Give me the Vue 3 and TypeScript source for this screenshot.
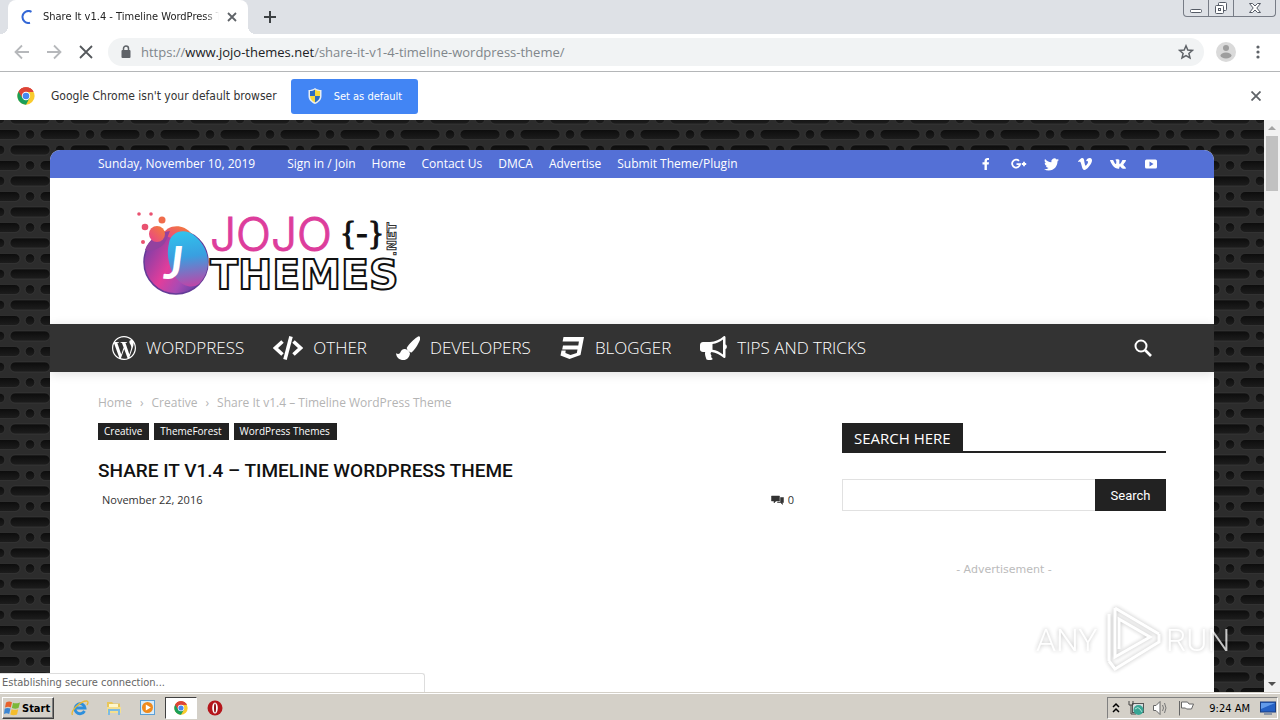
<script setup lang="ts">
import { ref } from 'vue'

interface NavItem { label: string; icon: string }

const query = ref('')
const address = { scheme: 'https://', host: 'www.jojo-themes.net', path: '/share-it-v1-4-timeline-wordpress-theme/' }
const topLinks: string[] = ['Sign in / Join', 'Home', 'Contact Us', 'DMCA', 'Advertise', 'Submit Theme/Plugin']
const socials: string[] = ['facebook', 'google', 'twitter', 'vimeo', 'vk', 'youtube']
const nav: NavItem[] = [
  { label: 'WORDPRESS', icon: 'wordpress' },
  { label: 'OTHER', icon: 'code' },
  { label: 'DEVELOPERS', icon: 'brush' },
  { label: 'BLOGGER', icon: 'css' },
  { label: 'TIPS AND TRICKS', icon: 'horn' },
]
const tags: string[] = ['Creative', 'ThemeForest', 'WordPress Themes']
</script>

<template>
  <div class="screen">
    <svg class="defs" aria-hidden="true">
      <symbol id="chrome" viewBox="0 0 24 24">
        <circle cx="12" cy="12" r="11.5" fill="#f9cb2e" />
        <path d="M12 12 2 6.3A11.5 11.5 0 0 1 22 6.3L12 6.5Z" fill="#dd4437" />
        <path d="M2 6.3A11.5 11.5 0 0 0 12 23.5L16.8 14.8 12 12Z" fill="#1a9f59" />
        <path d="M12 6.5H22.1A11.5 11.5 0 0 0 2 6.3L7.2 14.8Z" fill="#dd4437" />
        <circle cx="12" cy="12" r="5.6" fill="#fff" />
        <circle cx="12" cy="12" r="4.4" fill="#4688f1" />
      </symbol>
    </svg>

    <header class="tabs">
      <div class="tab">
        <svg class="spinner" viewBox="0 0 14 14"><path d="M10.5 1.8A6 6 0 1 0 9 12.8" fill="none" stroke="#3367d6" stroke-width="2" /></svg>
        <span class="tab-title">Share It v1.4 - Timeline WordPress Theme</span>
        <button class="plain" aria-label="Close tab">
          <svg width="10" height="10" viewBox="0 0 10 10"><path d="M1 1 9 9M9 1 1 9" stroke="#5f6368" stroke-width="1.8" /></svg>
        </button>
      </div>
      <button class="plain new-tab" aria-label="New tab">
        <svg width="12" height="12" viewBox="0 0 12 12"><path d="M6 0V12M0 6H12" stroke="#3c4043" stroke-width="2" /></svg>
      </button>
      <div class="win">
        <button aria-label="Minimize"><svg width="14" height="14" viewBox="0 0 14 14"><rect x="1.5" y="8.5" width="11" height="3" rx="1" fill="#fff" stroke="#555b66" /></svg></button>
        <button aria-label="Restore"><svg width="14" height="14" viewBox="0 0 14 14"><rect x="4.500" y="1.500" width="8" height="8" rx="1" fill="#fff" stroke="#555b66" /><rect x="1.500" y="4.500" width="8" height="8" rx="1" fill="#fff" stroke="#555b66" /><rect x="4.500" y="7.500" width="2" height="2" fill="none" stroke="#555b66" /></svg></button>
        <button class="wide" aria-label="Close"><svg width="14" height="14" viewBox="0 0 14 14"><path d="M1.500 2.500H4.500L7 5 9.500 2.500H12.500L8.800 7 12.500 11.500H9.500L7 9 4.500 11.500H1.500L5.200 7Z" fill="#fff" stroke="#555b66" /></svg></button>
      </div>
    </header>

    <div class="toolbar">
      <button class="plain" aria-label="Back"><svg width="16" height="16" viewBox="0 0 16 16"><path d="M15 8H2M8 1.500 1.500 8 8 14.500" fill="none" stroke="#b6b8bb" stroke-width="1.800" /></svg></button>
      <button class="plain" aria-label="Forward"><svg width="16" height="16" viewBox="0 0 16 16"><path d="M1 8H14M8 1.500 14.500 8 8 14.500" fill="none" stroke="#b6b8bb" stroke-width="1.800" /></svg></button>
      <button class="plain" aria-label="Stop"><svg width="16" height="16" viewBox="0 0 16 16"><path d="M2 2 14 14M14 2 2 14" stroke="#55585c" stroke-width="1.800" /></svg></button>
      <div class="omnibox">
        <svg width="10" height="14" viewBox="0 0 10 14"><path d="M2.500 6V3.500a2.500 2.500 0 0 1 5 0V6" fill="none" stroke="#5f6368" stroke-width="1.500" /><rect x="0.500" y="5" width="9" height="8" rx="1" fill="#5f6368" /></svg>
        <p class="url">{{ address.scheme }}<b>{{ address.host }}</b>{{ address.path }}</p>
        <button class="plain" aria-label="Bookmark"><svg width="16" height="16" viewBox="0 0 16 16"><path d="M8 1.800 9.800 6 14.400 6.400 10.900 9.400 12 13.900 8 11.500 4 13.900 5.100 9.400 1.600 6.400 6.200 6Z" fill="none" stroke="#5f6368" stroke-width="1.500" /></svg></button>
      </div>
      <button class="plain profile" aria-label="Profile"><svg width="20" height="20" viewBox="0 0 20 20"><circle cx="10" cy="10" r="10" fill="#dadada" /><circle cx="10" cy="6" r="3" fill="#9e9e9e" /><ellipse cx="10" cy="13.500" rx="5.500" ry="3" fill="#9e9e9e" /></svg></button>
      <button class="plain" aria-label="Menu"><svg width="4" height="14" viewBox="0 0 4 14" fill="#5f6368"><circle cx="2" cy="2" r="1.600" /><circle cx="2" cy="7" r="1.600" /><circle cx="2" cy="12" r="1.600" /></svg></button>
    </div>

    <div class="infobar">
      <svg width="18" height="18"><use href="#chrome" /></svg>
      <span class="info-text">Google Chrome isn't your default browser</span>
      <button class="set-default">
        <svg width="14" height="16" viewBox="0 0 14 16"><path d="M7 0C5 1.500 3 2 0.500 2V8c0 4 3 6.500 6.500 8 3.500-1.500 6.500-4 6.500-8V2C11 2 9 1.500 7 0Z" fill="#e8edf2" /><path d="M7 1.500C5.500 2.500 4 3 2 3V8H7Z" fill="#2c6cc4" /><path d="M7 1.500C8.500 2.500 10 3 12 3V8H7Z" fill="#f7d93b" /><path d="M2 8H7V14.500C4 13 2 11 2 8Z" fill="#f7d93b" /><path d="M12 8H7V14.500C10 13 12 11 12 8Z" fill="#2c6cc4" /></svg>
        <span>Set as default</span>
      </button>
      <button class="plain dismiss" aria-label="Dismiss"><svg width="10" height="10" viewBox="0 0 10 10"><path d="M0.500 0.500 9.500 9.500M9.500 0.500 0.500 9.500" stroke="#5f6368" stroke-width="1.800" /></svg></button>
    </div>

    <div class="viewport">
      <div class="canvas">
        <svg class="texture" aria-hidden="true">
          <defs>
            <linearGradient id="hole" x1="0" y1="0" x2="0" y2="1"><stop offset="0" stop-color="#0c0c0c" /><stop offset="1" stop-color="#1d1d1d" /></linearGradient>
            <pattern id="grille" width="60" height="31" patternUnits="userSpaceOnUse">
              <rect width="60" height="31" fill="#2c2c2c" />
              <g fill="url(#hole)" stroke="#3a3a3a" stroke-width="0.600">
                <rect x="-20" y="9.500" width="40" height="10" rx="5" />
                <rect x="40" y="9.500" width="40" height="10" rx="5" />
                <circle cx="30" cy="14.500" r="4.800" />
                <rect x="10" y="25" width="40" height="10" rx="5" />
                <rect x="10" y="-6" width="40" height="10" rx="5" />
                <circle cx="0" cy="30" r="4.800" /><circle cx="60" cy="30" r="4.800" />
                <circle cx="0" cy="-1" r="4.800" /><circle cx="60" cy="-1" r="4.800" />
              </g>
            </pattern>
          </defs>
          <rect width="100%" height="100%" fill="url(#grille)" />
        </svg>

        <div class="site">
          <div class="topbar">
            <span class="date">Sunday, November 10, 2019</span>
            <nav class="toplinks"><a v-for="link in topLinks" :key="link" href="#">{{ link }}</a></nav>
            <div class="socials">
              <a v-for="s in socials" :key="s" href="#" :aria-label="s">
                <svg v-if="s === 'facebook'" width="14" height="14" viewBox="0 0 14 14"><path d="M5.500 13V7.500H3.500V5.300H5.500V4C5.500 2 6.700 1 8.500 1H10V3.100H9C8.200 3.100 7.900 3.500 7.900 4.200V5.300H10L9.700 7.500H7.900V13Z" fill="#fff" /></svg>
                <svg v-else-if="s === 'google'" width="16" height="14" viewBox="0 0 16 14"><path d="M8 3.800A4 4 0 1 0 9.100 7.200H5.500M13 4.800V9.200M10.800 7H15.200" fill="none" stroke="#fff" stroke-width="1.800" /></svg>
                <svg v-else-if="s === 'twitter'" width="15" height="15" viewBox="0 0 24 24"><path fill="#fff" d="M23.953 4.570a10 10 0 01-2.825.775 4.958 4.958 0 002.163-2.723c-.951.555-2.005.959-3.127 1.184a4.920 4.920 0 00-8.384 4.482C7.690 8.095 4.067 6.130 1.640 3.162a4.822 4.822 0 00-.666 2.475c0 1.710.870 3.213 2.188 4.096a4.904 4.904 0 01-2.228-.616v.060a4.923 4.923 0 003.946 4.827 4.996 4.996 0 01-2.212.085 4.936 4.936 0 004.604 3.417 9.867 9.867 0 01-6.102 2.105c-.390 0-.779-.023-1.170-.067a13.995 13.995 0 007.557 2.209c9.053 0 13.998-7.496 13.998-13.985 0-.210 0-.420-.015-.630A9.935 9.935 0 0024 4.590z" /></svg>
                <svg v-else-if="s === 'vimeo'" width="14" height="14" viewBox="0 0 24 24"><path fill="#fff" d="M23.977 6.416c-.105 2.338-1.739 5.543-4.894 9.609-3.268 4.247-6.026 6.370-8.290 6.370-1.409 0-2.578-1.294-3.553-3.881L5.322 11.400C4.603 8.816 3.834 7.522 3.010 7.522c-.179 0-.806.378-1.881 1.132L0 7.197a315.065 315.065 0 003.501-3.128C5.080 2.701 6.266 1.984 7.055 1.910c1.867-.180 3.016 1.100 3.447 3.838.465 2.953.789 4.789.971 5.507.539 2.450 1.131 3.674 1.776 3.674.502 0 1.256-.796 2.265-2.385 1.004-1.589 1.540-2.797 1.612-3.628.144-1.371-.395-2.061-1.614-2.061-.574 0-1.167.121-1.777.391 1.186-3.868 3.434-5.757 6.762-5.637 2.473.060 3.628 1.664 3.493 4.797z" /></svg>
                <svg v-else-if="s === 'vk'" width="16" height="16" viewBox="0 0 24 24"><path fill="#fff" d="M13.162 18.994c.609 0 .858-.406.851-.915-.031-1.917.714-2.949 2.059-1.604 1.488 1.488 1.796 2.519 3.603 2.519h3.200c.808 0 1.126-.260 1.126-.668 0-.863-1.421-2.386-2.625-3.504-1.686-1.565-1.765-1.602-.313-3.486 1.801-2.339 4.157-5.336 2.073-5.336h-3.981c-.772 0-.828.435-1.103 1.083-.995 2.347-2.886 5.387-3.604 4.922-.751-.485-.407-2.406-.350-5.261.015-.754.011-1.271-1.141-1.539-.629-.145-1.241-.205-1.809-.205-2.273 0-3.841.953-2.950 1.119 1.571.293 1.420 3.692 1.054 5.160-.638 2.556-3.036-2.024-4.035-4.305-.241-.548-.315-.974-1.175-.974h-3.255c-.492 0-.787.160-.787.516 0 .602 2.960 6.720 5.786 9.770 2.756 2.975 5.480 2.708 7.376 2.708z" /></svg>
                <svg v-else width="14" height="14" viewBox="0 0 14 14"><path d="M2.500 2.500H11.500Q13 2.500 13 4V10Q13 11.500 11.500 11.500H2.500Q1 11.500 1 10V4Q1 2.500 2.500 2.500ZM5.500 4.500V9.500L9.500 7Z" fill="#fff" fill-rule="evenodd" /></svg>
              </a>
            </div>
          </div>

          <div class="brand">
            <a href="#" aria-label="JOJO THEMES">
              <svg width="270" height="90" viewBox="0 0 270 90">
                <defs>
                  <linearGradient id="orb" x1="0" y1="0.300" x2="1" y2="0.900"><stop offset="0" stop-color="#7a3fa8" /><stop offset="0.400" stop-color="#e23d9b" /><stop offset="0.650" stop-color="#a84bb4" /><stop offset="1" stop-color="#423c9c" /></linearGradient>
                  <linearGradient id="wave" x1="0.500" y1="0" x2="0.600" y2="1"><stop offset="0" stop-color="#30c2ec" /><stop offset="0.450" stop-color="#399fe0" /><stop offset="1" stop-color="#c044a6" /></linearGradient>
                  <linearGradient id="warm" x1="0" y1="1" x2="1" y2="0"><stop offset="0" stop-color="#e73f92" /><stop offset="1" stop-color="#f5822f" /></linearGradient>
                </defs>
                <circle cx="42" cy="54" r="32" fill="url(#orb)" stroke="#643b97" stroke-width="1.500" />
                <path d="M28 27C33 17 48 14 58 26L44 32Z" fill="url(#warm)" />
                <path d="M35 35C37 24 50 19 61 28 77 42 78 62 65 76 54 84 38 72 35 54 33 46 34 40 35 35Z" fill="url(#wave)" />
                <path d="M11 42C17 44 25 41 30 36 34 30 34 27 36 23 25 24 14 32 11 42Z" fill="#93429f" />
                <circle cx="23" cy="26" r="8" fill="url(#warm)" />
                <g fill="#e95270"><circle cx="28" cy="12" r="3.500" fill="#f06c4b" /><circle cx="11" cy="19" r="3.300" /><circle cx="5" cy="6" r="1.800" /><circle cx="17" cy="6" r="1.800" /><circle cx="9" cy="34" r="2" /></g>
                <text x="30" y="71" class="orb-j">J</text>
                <text x="76" y="43" class="jojo">JOJO</text>
                <text x="206" y="36" class="brace">{-}</text>
                <text x="76" y="81" class="themes">THEMES</text>
                <text transform="translate(262 48) rotate(-90)" class="net">.NET</text>
              </svg>
            </a>
          </div>

          <nav class="mainnav">
            <a v-for="item in nav" :key="item.label" href="#">
              <svg v-if="item.icon === 'wordpress'" width="24" height="24" viewBox="0 0 24 24"><path fill="#fff" d="M21.469 6.825c.840 1.537 1.318 3.300 1.318 5.175 0 3.979-2.156 7.456-5.363 9.325l3.295-9.527c.615-1.540.820-2.771.820-3.864 0-.405-.026-.780-.070-1.110m-7.981.105c.647-.030 1.232-.105 1.232-.105.582-.075.514-.930-.067-.899 0 0-1.755.135-2.880.135-1.064 0-2.850-.150-2.850-.150-.585-.030-.661.855-.075.885 0 0 .540.061 1.125.090l1.680 4.605-2.370 7.080L5.354 6.900c.649-.030 1.234-.100 1.234-.100.585-.075.516-.930-.065-.896 0 0-1.746.138-2.874.138-.200 0-.438-.008-.690-.015C4.911 3.150 8.235 1.215 12 1.215c2.809 0 5.365 1.072 7.286 2.833-.046-.003-.091-.009-.141-.009-1.060 0-1.812.923-1.812 1.914 0 .890.513 1.643 1.060 2.531.411.720.890 1.643.890 2.977 0 .915-.354 1.994-.821 3.479l-1.075 3.585-3.900-11.610.001.014zM12 22.784c-1.059 0-2.081-.153-3.048-.437l3.237-9.406 3.315 9.087c.024.053.050.101.078.149-1.120.393-2.325.609-3.582.609M1.211 12c0-1.564.336-3.050.935-4.390L7.290 21.709C3.694 19.960 1.212 16.271 1.211 12M12 0C5.385 0 0 5.385 0 12s5.385 12 12 12 12-5.385 12-12S18.615 0 12 0" /></svg>
              <svg v-else-if="item.icon === 'code'" width="30" height="24" viewBox="0 0 30 24"><path d="M9.500 5.500 2.500 12 9.500 18.500M20.500 5.500 27.500 12 20.500 18.500" fill="none" stroke="#fff" stroke-width="3.600" /><path d="M18 0.500 12 23.500" stroke="#fff" stroke-width="3.600" /></svg>
              <svg v-else-if="item.icon === 'brush'" width="24" height="24" viewBox="0 0 24 24" fill="#fff"><path d="M23.500 0.500C25 2 24 4 22.500 7 20.500 11 18 14.500 15.500 16.500 14 17 10.500 14 10.800 11.800 12.500 8.500 18 3 21 1.200Q22.600 0 23.500 0.500Z" /><path d="M9.800 13.200C11.500 13.600 13.800 15.600 14 17.500 13.300 21.500 11 24 7.500 24 3 24 0.500 21.500 0 17.200 1.800 18.300 3.500 18.500 4.500 16 5.500 13.500 7.500 12.700 9.800 13.200Z" /></svg>
              <svg v-else-if="item.icon === 'css'" width="25" height="24" viewBox="0 0 25 24"><path d="M3.500 1H24L20.500 19 9.500 23 0.500 19.500 1.500 14.500H5.700L5.400 17 10.500 19 16.800 17 17.500 13.500H2.200L3 9.500H18.300L18.900 5.500H2.600Z" fill="#fff" /></svg>
              <svg v-else width="27" height="24" viewBox="0 0 27 24"><path d="M24 0C25 0 25.500 0.500 25.500 1.500V8.500C27.300 9 27.300 12.500 25.500 13V20.500C25.500 21.500 25 22 24 22 20 18.500 16 16.500 11.500 16 10 17 10.500 18.500 11.500 19.500 10.800 21 11.500 22 12.800 23 11.500 24.500 8 24.300 6.500 23.500 5.700 21 4.500 18.500 5.200 16H3C1.500 16 0 14.800 0 13.500V9C0 7 1.500 6 3 6H10C15 6 20 3.500 24 0ZM23 3.500C19.500 6 16.500 7.500 12.500 8V13.800C16.500 14.200 19.500 15.800 23 18.500Z" fill="#fff" fill-rule="evenodd" /></svg>
              <span>{{ item.label }}</span>
            </a>
            <button class="plain find" aria-label="Open search"><svg width="18" height="18" viewBox="0 0 18 18"><circle cx="7" cy="7" r="5.500" fill="none" stroke="#fff" stroke-width="2" /><path d="M11 11 17 17" stroke="#fff" stroke-width="2.600" /></svg></button>
          </nav>

          <div class="content">
            <nav class="crumbs"><a href="#">Home</a><i>›</i><a href="#">Creative</a><i>›</i><span>Share It v1.4 – Timeline WordPress Theme</span></nav>
            <div class="columns">
              <main>
                <div class="tags"><a v-for="t in tags" :key="t" href="#">{{ t }}</a></div>
                <h1>SHARE IT V1.4 – TIMELINE WORDPRESS THEME</h1>
                <div class="meta">
                  <time>November 22, 2016</time>
                  <a href="#"><svg width="13" height="10" viewBox="0 0 13 10"><path d="M0.500 1H8.500V6H5L3 8V6H0.500Z M9.500 2.500H12.500V7.500H11.500V9.500L9.500 7.500H6.500V7H9.500Z" fill="#333" stroke="#333" stroke-width="0.500" /></svg>0</a>
                </div>
              </main>
              <aside>
                <h4><span>SEARCH HERE</span></h4>
                <form @submit.prevent>
                  <input v-model="query" type="text" aria-label="Search">
                  <button type="submit">Search</button>
                </form>
                <p class="ad">- Advertisement -</p>
              </aside>
            </div>
          </div>
        </div>
      </div>

      <div class="scrollbar">
        <svg width="16" height="16" viewBox="0 0 16 16"><path d="M4 10 8 6 12 10Z" fill="#a3a3a3" /></svg>
        <div class="thumb"></div>
        <svg class="down" width="16" height="16" viewBox="0 0 16 16"><path d="M4 6 8 10 12 6Z" fill="#505050" /></svg>
      </div>
      <div class="status">Establishing secure connection...</div>
      <svg class="watermark" width="204" height="76" viewBox="0 0 204 76">
        <g class="mark">
          <text x="4" y="48">ANY</text>
          <text x="134" y="48">RUN</text>
          <path d="M77 58V11M83 5 127 31M83 5V54L118 34 87 16V46M77 58 83 66 127 39V31" fill="none" stroke="#fff" stroke-width="3" />
        </g>
      </svg>
    </div>

    <footer class="taskbar">
      <button class="start">
        <svg width="17" height="16" viewBox="0 0 17 16"><path d="M2 2.500Q5 0.500 8 2.200L6.800 7.500Q4 6 1 7.600Z" fill="#e8622c" /><path d="M9 2.700Q12 4 16 2.400L14.500 8Q11.500 9.300 7.900 8Z" fill="#7bb83a" /><path d="M0.700 8.700Q3.500 7.200 6.500 8.600L5.200 14Q2.500 12.500 0 14Z" fill="#3c86d2" /><path d="M7.600 9.200Q11 10.500 14.200 9.200L13 14.500Q9.500 16 6.300 14.500Z" fill="#f5bd2c" /></svg>
        <span>Start</span>
      </button>
      <div class="quick">
        <button class="plain" aria-label="Internet Explorer"><svg width="18" height="18" viewBox="0 0 18 18"><path d="M13.500 12A5 5 0 1 1 14 9H5" fill="none" stroke="#2d8fdc" stroke-width="2.800" /><path d="M1.500 16C-1 12 10 1.500 16 2 18 3 16.500 5 16 6" fill="none" stroke="#e9b833" stroke-width="1.300" /></svg></button>
        <button class="plain" aria-label="Explorer"><svg width="18" height="18" viewBox="0 0 18 18"><path d="M2 3H7L8.500 4.500H15V8H2Z" fill="#e9c65a" /><rect x="4" y="5" width="9" height="4" fill="#fff7cc" /><rect x="2" y="8" width="14" height="6" fill="#f5df8f" /><path d="M4 16V11H14V16" fill="none" stroke="#7dbbe2" stroke-width="2" /></svg></button>
        <button class="plain" aria-label="Media Player"><svg width="18" height="18" viewBox="0 0 18 18"><rect x="1.500" y="1.500" width="14" height="14" fill="#d8ecfa" stroke="#5b9fd6" /><circle cx="8.500" cy="8.500" r="5.500" fill="#f08a1d" /><path d="M6.800 5.500V11.500L11.800 8.500Z" fill="#fff" /></svg></button>
        <button class="plain active" aria-label="Chrome"><svg width="14" height="14"><use href="#chrome" /></svg></button>
        <button class="plain" aria-label="Opera"><svg width="18" height="18" viewBox="0 0 18 18"><circle cx="9" cy="9" r="7.500" fill="#b5161c" /><ellipse cx="9" cy="9" rx="2.800" ry="5.500" fill="#fff" /><ellipse cx="9" cy="9" rx="1" ry="4.500" fill="#8e1015" /></svg></button>
      </div>
      <div class="tray">
        <svg width="8" height="12" viewBox="0 0 8 12"><path d="M1 5 4 2 7 5M1 10 4 7 7 10" fill="none" stroke="#000" stroke-width="1.500" /></svg>
        <svg width="16" height="16" viewBox="0 0 16 16"><rect x="4.500" y="3.500" width="11" height="9" fill="#d8dde0" stroke="#555" /><path d="M1 1V5H5V1M3 5V14H8" fill="none" stroke="#444" /><circle cx="10.500" cy="10" r="5" fill="#38a695" /><path d="M7 9Q10 6 12 9T14 12" stroke="#b5e4da" fill="none" /></svg>
        <svg width="18" height="16" viewBox="0 0 18 16"><path d="M1.500 5.500H4L8 1.500V14.500L4 10.500H1.500Z" fill="#fff" stroke="#666" /><path d="M10.500 5Q12.500 8 10.500 11M12.500 3Q15.500 8 12.500 13" fill="none" stroke="#777" /></svg>
        <svg width="17" height="16" viewBox="0 0 17 16"><path d="M1.500 1V15.500M3.500 2H9.500L11 4H15.500L13.500 9H8.500L7.500 8H3.500Z" fill="#fff" stroke="#666" /></svg>
        <time>9:24 AM</time>
        <svg width="16" height="14" viewBox="0 0 16 14"><rect x="0.500" y="1" width="15" height="10" fill="#2561c4" stroke="#1b3f82" /><path d="M1 2H15L1 8Z" fill="#629bea" /><rect x="4" y="12" width="8" height="2" fill="#8b95a5" /></svg>
      </div>
    </footer>
  </div>
</template>

<style>
body { margin: 0; }
</style>

<style scoped>
* { box-sizing: border-box; }
.screen { height: 100vh; display: flex; flex-direction: column; overflow: hidden; background: #fff; font-family: "DejaVu Sans Condensed", "DejaVu Sans", sans-serif; color: #222; }
.defs { position: absolute; width: 0; height: 0; }
svg { display: block; flex: none; }
a { color: inherit; text-decoration: none; }
h1, h4, p { margin: 0; }
button { font: inherit; cursor: pointer; }
.plain { border: 0; padding: 0; background: none; display: flex; align-items: center; justify-content: center; }

.tabs { display: flex; flex: none; height: 34px; background: #dee1e6; padding-left: 8px; }
.tab { width: 240px; height: 34px; display: flex; align-items: center; background: #fff; border-radius: 8px 8px 0 0; padding: 0 11px 0 13px; gap: 8px; position: relative; }
.tab::before, .tab::after { content: ""; position: absolute; bottom: 0; width: 8px; height: 8px; }
.tab::before { left: -8px; background: radial-gradient(circle at 0 0, #dee1e6 8px, #fff 8px); }
.tab::after { right: -8px; background: radial-gradient(circle at 100% 0, #dee1e6 8px, #fff 8px); }
.spinner { width: 14px; height: 14px; }
.tab-title { flex: 1; font-size: 11px; line-height: 16px; white-space: nowrap; overflow: hidden; mask-image: linear-gradient(90deg, #000 92%, transparent); }
.new-tab { width: 28px; margin-left: 8px; }
.win { display: flex; margin-left: auto; margin-right: 4px; height: 17px; border: 1px solid #777c86; border-top: 0; border-radius: 0 0 4px 4px; }
.win button { width: 25px; padding: 0; border: 0; border-right: 1px solid #777c86; background: none; display: flex; align-items: center; justify-content: center; }
.win .wide { width: 41px; border: 0; }

.toolbar { flex: none; display: flex; align-items: center; height: 38px; padding: 0 20px 2px 14px; gap: 16px; border-bottom: 1px solid #b4b6b8; }
.omnibox { flex: 1; height: 28px; border-radius: 14px; background: #f1f3f4; display: flex; align-items: center; padding: 0 10px 0 13px; margin-right: -4px; margin-left: -2px; }
.profile { margin-right: 4px; }
.url { flex: 1; padding-left: 10px; font-family: "Open Sans", sans-serif; font-size: 13px; line-height: 20px; color: #80868b; white-space: nowrap; overflow: hidden; }
.url b { font-weight: 400; color: #202124; }

.infobar { flex: none; display: flex; align-items: center; height: 48px; padding: 0 19px 0 17px; }
.info-text { margin-left: 16px; font-size: 12px; line-height: 16px; color: #333; }
.set-default { margin-left: 14px; width: 127px; height: 35px; border: 0; border-radius: 3px; background: #4285f4; color: #fff; display: flex; align-items: center; padding: 0 16px 0 17px; gap: 12px; font-size: 11px; white-space: nowrap; }
.dismiss { margin-left: auto; }

.viewport { flex: 1; min-height: 0; display: flex; position: relative; overflow: hidden; }
.canvas { flex: 1; min-width: 0; position: relative; padding: 30px 50px 0; display: flex; }
.texture { position: absolute; inset: 0; width: 100%; height: 100%; }
.site { flex: 1; min-width: 0; position: relative; background: #fff; border-radius: 10px 10px 0 0; overflow: hidden; font-family: "Open Sans", "Noto Sans", sans-serif; }
.topbar { display: flex; align-items: center; height: 28px; padding: 0 48px; background: #5470d6; color: #fff; font-size: 12px; line-height: 28px; }
.toplinks { display: flex; gap: 16px; margin-left: 32px; }
.socials { margin-left: auto; margin-right: -1px; display: flex; }
.socials a { width: 33px; height: 28px; display: flex; align-items: center; justify-content: center; }
.brand { height: 146px; padding: 30px 84px 0; }
.brand a { display: block; }
.orb-j { font: italic 700 46px Lato, sans-serif; fill: #fff; }
.jojo { font: 300 46px Inter, sans-serif; fill: #dd3d9c; stroke: #dd3d9c; stroke-width: 1px; }
.brace { font: 34px "Liberation Serif", serif; fill: #111; stroke: #111; stroke-width: 1px; }
.themes { font: 700 41px "DejaVu Sans", sans-serif; fill: #fff; stroke: #111; stroke-width: 2px; }
.net { font: 700 13px "DejaVu Sans", sans-serif; fill: #fff; stroke: #333; stroke-width: 1px; }
.mainnav { display: flex; align-items: center; height: 48px; padding: 0 62px 0 48px; background: #333; color: #fff; box-shadow: 0 2px 10px rgba(0, 0, 0, 0.12); font-size: 17px; font-weight: 300; }
.mainnav a { display: flex; align-items: center; gap: 10px; padding: 0 15px 0 14px; line-height: 24px; white-space: nowrap; }
.find { margin-left: auto; }
.content { padding: 20px 48px 0; }
.crumbs { display: flex; font-size: 12px; line-height: 22px; color: #b4b4b4; }
.crumbs i { font-style: normal; padding: 0 8px; }
.columns { display: grid; grid-template-columns: 696fr 324fr; gap: 48px; padding-top: 9px; }
.tags { display: flex; gap: 5px; }
.tags a { background: #222; color: #fff; font-size: 10px; line-height: 17px; padding: 0 7px 0 6px; }
h1 { margin-top: 16px; font-family: Roboto, sans-serif; font-size: 19px; line-height: 30px; font-weight: 500; color: #111; white-space: nowrap; }
.meta { display: flex; justify-content: space-between; margin-top: 6px; padding-left: 4px; font-size: 11px; line-height: 16px; color: #333; }
.meta a { display: flex; align-items: center; gap: 4px; }
h4 { border-bottom: 2px solid #222; display: flex; font-weight: 400; font-size: 15px; line-height: 28px; }
h4 span { background: #222; color: #fff; padding: 0 12px; height: 28px; line-height: 31px; }
form { display: flex; margin-top: 26px; height: 32px; }
input { flex: 1; min-width: 0; border: 1px solid #e1e1e1; border-right: 0; padding: 0 8px; background: #fff; font: inherit; outline: 0; }
form button { width: 71px; border: 0; background: #222; color: #fff; font: 13px Roboto, sans-serif; padding: 0; }
.ad { margin-top: 51px; text-align: center; font-family: "DejaVu Sans", sans-serif; font-size: 11px; line-height: 16px; color: #bbb; }

.scrollbar { flex: none; width: 16px; background: #f1f1f1; display: flex; flex-direction: column; align-items: center; }
.thumb { width: 12px; height: 55px; background: #c1c1c1; }
.down { margin-top: auto; }
.status { position: absolute; left: 0; bottom: 0; width: 425px; height: 19px; padding-left: 2px; background: #fff; border: 1px solid #ddd; border-left: 0; border-bottom: 0; border-radius: 0 3px 0 0; font-size: 11px; line-height: 18px; color: #666; }
.watermark { position: absolute; right: 44px; bottom: 13px; }
.mark { filter: drop-shadow(0 0 2px rgba(0, 0, 0, 0.35)); opacity: 0.75; }
.mark text { font: 300 32px Roboto, sans-serif; fill: #fff; }

.taskbar { flex: none; display: flex; align-items: center; height: 28px; padding: 3px 2px 0; background: #d4d0c8; border-top: 1px solid #d4d0c8; box-shadow: inset 0 1px #fff; }
.start { width: 52px; height: 22px; display: flex; align-items: center; gap: 1px; padding: 0 1px; background: #d4d0c8; border: 1px solid; border-color: #fff #404040 #404040 #fff; box-shadow: inset -1px -1px #808080; font-size: 11px; font-weight: 700; color: #000; }
.quick { display: flex; margin-left: 9px; }
.quick button { width: 34px; height: 22px; }
.quick .active { width: 32px; margin-right: 1px; background: #fff; border: 1px solid; border-color: #404040 #fff #fff #404040; }
.tray { margin-left: auto; height: 22px; display: flex; align-items: center; gap: 8px; padding: 0 1px 0 4px; border: 1px solid; border-color: #808080 #fff #fff #808080; font-size: 11px; color: #000; }
.tray time { padding: 0 2px 0 6px; }
</style>
